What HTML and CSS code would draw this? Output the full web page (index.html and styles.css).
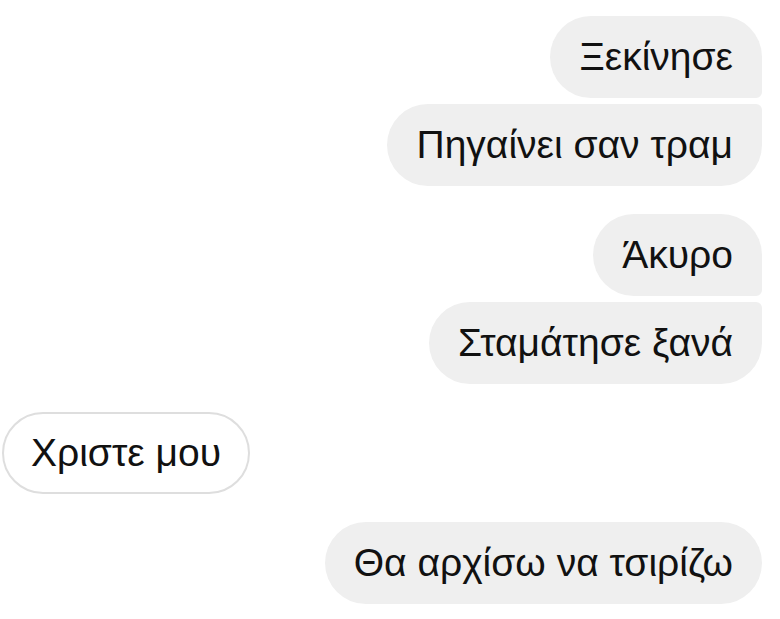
FILE: index.html
```html
<!DOCTYPE html>
<html lang="el">
<head>
  <meta charset="UTF-8">
  <title>Chat</title>
  <link rel="stylesheet" href="styles.css">
</head>
<body>

<div class="chat">
  <div class="group mine">
    <div class="bubble first">Ξεκίνησε</div>
    <div class="bubble last">Πηγαίνει σαν τραμ</div>
  </div>

  <div class="group mine">
    <div class="bubble first">Άκυρο</div>
    <div class="bubble last">Σταμάτησε ξανά</div>
  </div>

  <div class="group theirs">
    <div class="bubble">Χριστε μου</div>
  </div>

  <div class="group mine">
    <div class="bubble">Θα αρχίσω να τσιρίζω</div>
  </div>
</div>

</body>
</html>
```

FILE: styles.css
```css
body {
  margin: 0;
  font-family: 'Liberation Sans', Arial, sans-serif;
  background-color: white;
  color: #111;
}

.chat {
  display: flex;
  flex-direction: column;
  gap: 28px;
  padding: 16px 18px 0 2px;
}

.group {
  display: flex;
  flex-direction: column;
  gap: 6px;
}

.mine {
  align-items: flex-end;
}

.theirs {
  align-items: flex-start;
}

.bubble {
  font-size: 39px;
  line-height: 46px;
  padding: 18px 29px;
  border-radius: 41px;
  background-color: #efefef;
}

.mine .first {
  border-bottom-right-radius: 6px;
}

.mine .last {
  border-top-right-radius: 6px;
}

.theirs .bubble {
  background-color: white;
  border: 2px solid #dedede;
  padding: 16px 27px;
}
```
